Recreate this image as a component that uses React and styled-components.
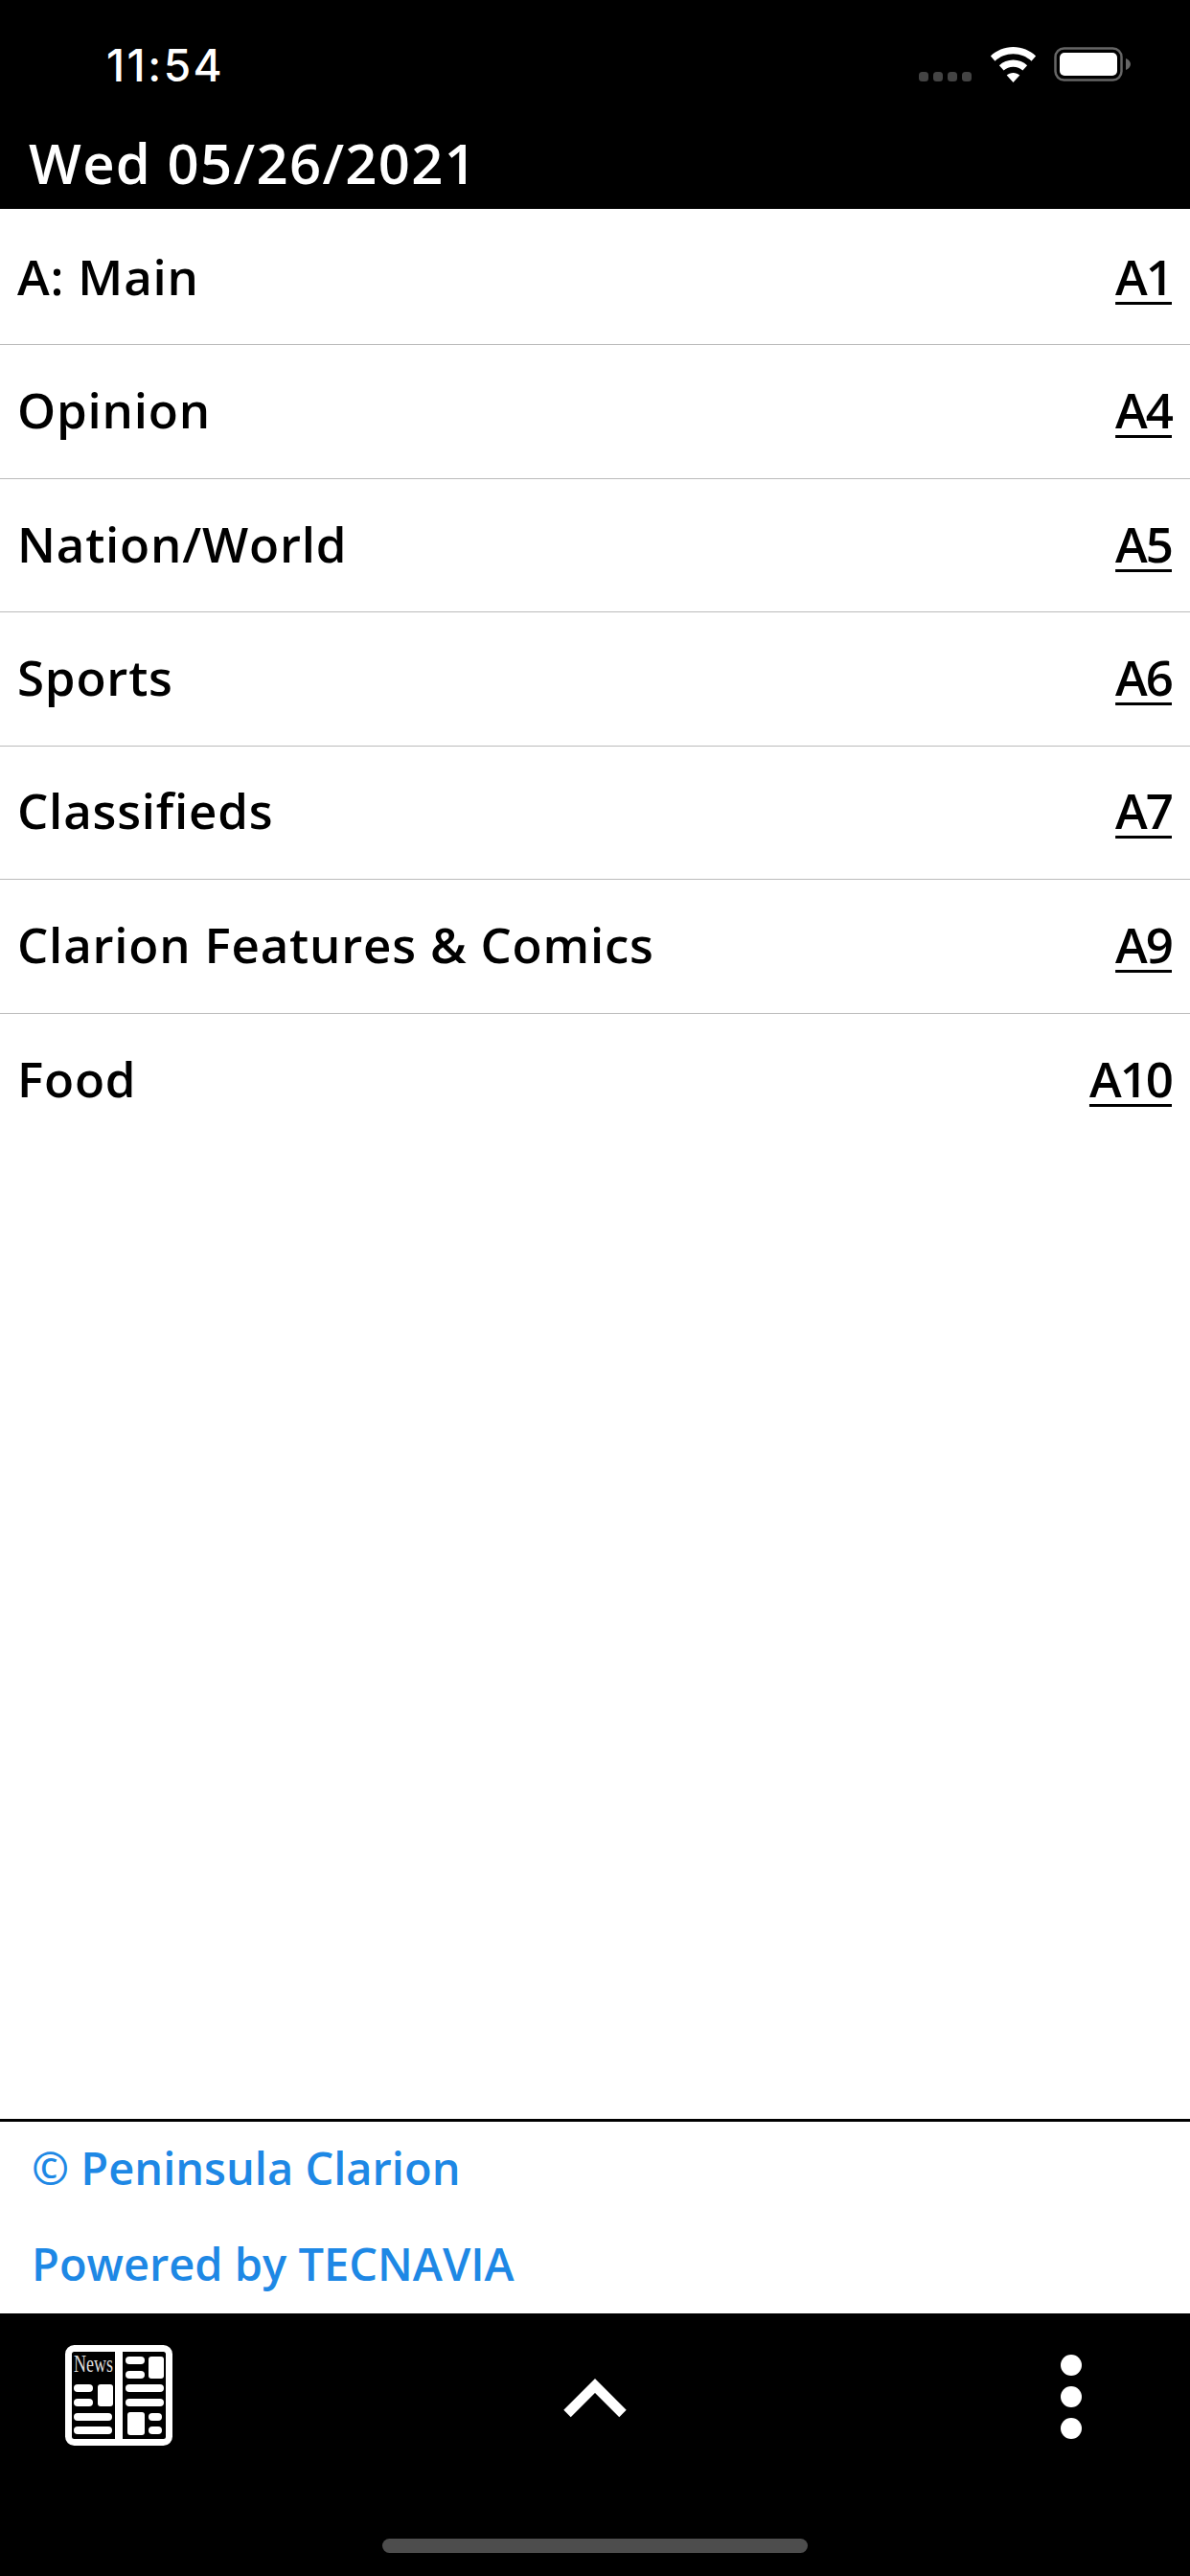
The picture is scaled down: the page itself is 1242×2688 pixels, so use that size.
import React from 'react';
import styled, { createGlobalStyle } from 'styled-components';

const Global = createGlobalStyle`
  html, body { margin: 0; padding: 0; background: #fff; }
  * { box-sizing: border-box; }
`;

const Screen = styled.div`
  width: 1242px; height: 2688px; display: flex; flex-direction: column;
  background: #fff; font-family: "Open Sans", "Lato", sans-serif; overflow: hidden;
`;
const Header = styled.header`
  height: 218px; background: #000; color: #fff; display: flex; flex-direction: column;
`;
const StatusBar = styled.div`
  height: 138px; display: flex; justify-content: space-between; align-items: flex-start;
  padding: 46px 61px 0 111px;
`;
const Clock = styled.span`
  font-family: "Inter", sans-serif; font-size: 46px; line-height: 44px; font-weight: 500; letter-spacing: 2.5px;
`;
const StatusIcons = styled.div`
  display: flex; align-items: flex-start; padding-top: 3px;
`;
const DateLine = styled.div`
  padding-left: 30px; font-size: 58px; line-height: 64px; font-weight: 600; letter-spacing: 1.3px;
`;
const List = styled.ul`
  list-style: none; margin: 0; padding: 3px 0 0; flex: 1;
`;
const Row = styled.li`
  height: 139.45px; padding: 0 19px 5px 18px; display: flex; align-items: center; justify-content: space-between;
  border-bottom: ${p => (p.$last ? 'none' : '1.5px solid #bbb')};
  color: #000; font-size: 51px; font-weight: 600; letter-spacing: 0.8px;
`;
const PageLink = styled.a`
  color: #000; letter-spacing: -2px; text-decoration: underline; text-decoration-thickness: 3px; text-underline-offset: 7px;
`;
const Credits = styled.footer`
  height: 203px; border-top: 3px solid #000; padding: 14px 0 0 33px; display: flex; flex-direction: column; gap: 31px;
  color: #1e88e5; font-size: 47px; font-weight: 600; letter-spacing: 0;
`;
const CreditLine = styled.div`
  line-height: 69px; height: 69px;
`;
const BottomBar = styled.nav`
  height: 274px; background: #000; position: relative; display: grid; grid-template-columns: 1fr 1fr 1fr;
  align-items: start; padding: 33px 113px 0 68px;
`;
const HomeBar = styled.div`
  position: absolute; left: 399px; top: 235px; width: 444px; height: 15px; border-radius: 8px; background: #4d4d4d;
`;
const Glyph = styled.svg`
  display: block; flex: none;
`;
const NewsGlyph = styled(Glyph)`
  justify-self: start;
`;
const UpGlyph = styled(Glyph)`
  justify-self: center; margin-top: 35px; margin-left: 45px;
`;
const MoreGlyph = styled(Glyph)`
  justify-self: end; margin-top: 10px;
`;

const SECTIONS = [
  ['A: Main', 'A1'], ['Opinion', 'A4'], ['Nation/World', 'A5'], ['Sports', 'A6'],
  ['Classifieds', 'A7'], ['Clarion Features & Comics', 'A9'], ['Food', 'A10'],
];

const Pill = ({ x, y, w, h }) => <rect x={x} y={y} width={w} height={h} rx={h / 2} fill="#fff" />;
const Block = ({ x, y, w, h }) => <rect x={x} y={y} width={w} height={h} rx="3" fill="#fff" />;

export default function App() {
  return (
    <Screen>
      <Global />
      <Header>
        <StatusBar>
          <Clock>11:54</Clock>
          <StatusIcons>
            <Glyph width="222" height="40" viewBox="0 0 222 40">
              <g fill="#444">
                <rect x="0" y="26" width="10" height="10" rx="3.5" />
                <rect x="15" y="26" width="10" height="10" rx="3.5" />
                <rect x="30" y="26" width="10" height="10" rx="3.5" />
                <rect x="45" y="26" width="10" height="10" rx="3.5" />
              </g>
              <path fill="#fff" d="M98.5 0c-9.2 0-17.5 3.6-23.6 9.4l4.6 5.3c4.9-4.6 11.5-7.5 19-7.500s14.100 2.900 19 7.500l4.600-5.300C116 3.600 107.700 0 98.500 0zM98.500 13.500c-5.700 0-10.800 2.200-14.600 5.800l4.700 5.300c2.600-2.400 6.100-3.900 9.900-3.900s7.300 1.500 9.900 3.900l4.700-5.300c-3.800-3.600-8.900-5.800-14.600-5.800zM98.500 27c-2.600 0-5 1-6.800 2.600l6.800 7.400 6.800-7.400c-1.800-1.600-4.200-2.600-6.800-2.600z" />
              <rect x="142.500" y="1.500" width="69" height="33" rx="9" fill="none" stroke="#666" strokeWidth="2.500" />
              <rect x="147" y="6" width="60" height="24" rx="5" fill="#fff" />
              <path fill="#666" d="M216 12c3 1 5 3.500 5 6s-2 5-5 6z" />
            </Glyph>
          </StatusIcons>
        </StatusBar>
        <DateLine>Wed 05/26/2021</DateLine>
      </Header>
      <List>
        {SECTIONS.map(([name, page], i) => (
          <Row key={name} $last={i === SECTIONS.length - 1}>
            <span>{name}</span>
            <PageLink>{page}</PageLink>
          </Row>
        ))}
      </List>
      <Credits>
        <CreditLine>© Peninsula Clarion</CreditLine>
        <CreditLine>Powered by TECNAVIA</CreditLine>
      </Credits>
      <BottomBar>
        <NewsGlyph width="112" height="105" viewBox="0 0 112 105">
          <rect x="3.5" y="3.5" width="105" height="98" rx="6" fill="none" stroke="#fff" strokeWidth="7" />
          <rect x="52" y="0" width="8" height="105" fill="#fff" />
          <text x="9" y="28" fontFamily="Liberation Serif, serif" fontSize="26" fill="#ddd" textLength="41" lengthAdjust="spacingAndGlyphs">News</text>
          <Pill x="9" y="41" w="20" h="8" />
          <Pill x="9" y="56" w="20" h="8" />
          <Block x="34" y="41" w="16" h="23" />
          <Pill x="9" y="71" w="40" h="8" />
          <Pill x="9" y="85" w="40" h="8" />
          <Pill x="63" y="12" w="20" h="8" />
          <Pill x="63" y="27" w="20" h="8" />
          <Block x="87" y="12" w="16" h="23" />
          <Pill x="63" y="41" w="40" h="8" />
          <Pill x="63" y="56" w="40" h="8" />
          <Block x="65" y="70" w="18" h="24" />
          <Pill x="87" y="71" w="14" h="8" />
          <Pill x="87" y="85" w="14" h="8" />
        </NewsGlyph>
        <UpGlyph width="66" height="42" viewBox="0 0 66 42">
          <path d="M4 36.5 L33 7.500 L62 36.5" fill="none" stroke="#fff" strokeWidth="10.5" />
        </UpGlyph>
        <MoreGlyph width="22" height="88" viewBox="0 0 22 88">
          <circle cx="11" cy="11" r="11" fill="#fff" />
          <circle cx="11" cy="44" r="11" fill="#fff" />
          <circle cx="11" cy="77" r="11" fill="#fff" />
        </MoreGlyph>
        <HomeBar />
      </BottomBar>
    </Screen>
  );
}
